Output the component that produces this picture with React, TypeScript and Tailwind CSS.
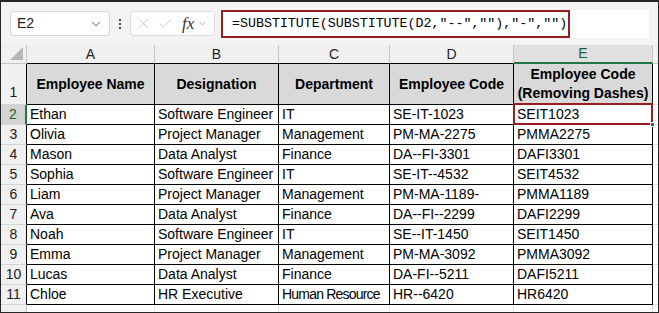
import { ChevronDown, X, Check } from 'lucide-react';

// ─── Data ─────────────────────────────────────────────────────────────────────

type Row = { name: string; designation: string; department: string; code: string; clean: string };

const rows: Row[] = [
  { name: 'Ethan', designation: 'Software Engineer', department: 'IT', code: 'SE-IT-1023', clean: 'SEIT1023' },
  { name: 'Olivia', designation: 'Project Manager', department: 'Management', code: 'PM-MA-2275', clean: 'PMMA2275' },
  { name: 'Mason', designation: 'Data Analyst', department: 'Finance', code: 'DA--FI-3301', clean: 'DAFI3301' },
  { name: 'Sophia', designation: 'Software Engineer', department: 'IT', code: 'SE-IT--4532', clean: 'SEIT4532' },
  { name: 'Liam', designation: 'Project Manager', department: 'Management', code: 'PM-MA-1189-', clean: 'PMMA1189' },
  { name: 'Ava', designation: 'Data Analyst', department: 'Finance', code: 'DA--FI--2299', clean: 'DAFI2299' },
  { name: 'Noah', designation: 'Software Engineer', department: 'IT', code: 'SE--IT-1450', clean: 'SEIT1450' },
  { name: 'Emma', designation: 'Project Manager', department: 'Management', code: 'PM-MA-3092', clean: 'PMMA3092' },
  { name: 'Lucas', designation: 'Data Analyst', department: 'Finance', code: 'DA-FI--5211', clean: 'DAFI5211' },
  { name: 'Chloe', designation: 'HR Executive', department: 'Human Resource', code: 'HR--6420', clean: 'HR6420' },
];

const letters = ['A', 'B', 'C', 'D', 'E'];

// ─── Formula bar ──────────────────────────────────────────────────────────────

function FormulaBar() {
  return (
    <div className="h-[43px] shrink-0 flex items-start pt-[9px] pl-[9px]">
      <div className="w-[100px] h-[25px] bg-white border border-[#d6d6d6] rounded-[4px] flex items-center justify-between pl-[6px] pr-[6px]">
        <span className="text-[14px] text-[#1f1f1f]">E2</span>
        <ChevronDown size={14} strokeWidth={1.5} className="text-[#444]" />
      </div>
      <div className="w-[20px] h-[25px] flex flex-col items-center justify-center gap-[2px]">
        <span className="w-[2px] h-[2px] bg-[#444]" />
        <span className="w-[2px] h-[2px] bg-[#444]" />
        <span className="w-[2px] h-[2px] bg-[#444]" />
      </div>
      <div className="w-[85px] h-[25px] bg-white border border-[#dcdcdc] rounded-[4px] flex items-center pl-[4px]">
        <X size={17} strokeWidth={1} className="text-[#b8b8b8]" />
        <Check size={17} strokeWidth={1} className="text-[#b8b8b8] ml-[5px]" />
        <span className="ml-[8px] font-['Liberation_Serif'] italic text-[17px] leading-none text-[#333]">fx</span>
        <ChevronDown size={11} strokeWidth={1.5} className="text-[#888] ml-[3px]" />
      </div>
      <div className="ml-[6px] -mt-[1px] w-[428px] h-[28px] bg-white flex">
        <div className="w-[349px] h-[28px] border-2 border-[#9b1b1f] flex items-center pl-[9px]">
          <span className="font-['Liberation_Mono'] text-[13.3px] text-black whitespace-pre">
            =SUBSTITUTE(SUBSTITUTE(D2,"--",""),"-","")
          </span>
        </div>
      </div>
    </div>
  );
}

// ─── Sheet ────────────────────────────────────────────────────────────────────

function Cell({ children, tight }: { children: React.ReactNode; tight?: boolean }) {
  return (
    <div className={`border-b border-r border-black flex items-center pl-[3px] text-[14px] text-black whitespace-nowrap overflow-hidden ${tight ? 'tracking-[-0.8px]' : ''}`}>
      {children}
    </div>
  );
}

function Sheet() {
  return (
    <div className="flex-1 grid grid-cols-[26px_128px_124px_111px_124px_139px_1fr] grid-rows-[19px_41px_repeat(10,20px)_1fr] bg-white">
      {/* Column headers */}
      <div className="bg-[#f0f0f0] border-r border-b border-[#c6c6c6] relative">
        <svg className="absolute right-[3px] bottom-[3px]" width="13" height="13" viewBox="0 0 13 13">
          <polygon points="13,0 13,13 0,13" fill="#b5b5b5" />
        </svg>
      </div>
      {letters.map(l =>
        l === 'E' ? (
          <div key={l} className="bg-[#e0e0e0] border-r border-[#c6c6c6] border-b-2 border-b-[#217346] flex items-center justify-center text-[14px] text-[#1e5c3a]">
            {l}
          </div>
        ) : (
          <div key={l} className="bg-[#f0f0f0] border-r border-[#c6c6c6] border-b border-b-black flex items-center justify-center text-[14px] text-[#222]">
            {l}
          </div>
        )
      )}
      <div className="bg-[#f0f0f0] border-b border-[#c6c6c6]" />

      {/* Row 1 */}
      <div className="bg-[#f0f0f0] border-b border-[#d4d4d4] border-r border-r-black flex items-end justify-center text-[14px] text-[#222] pb-[1px]">1</div>
      {['Employee Name', 'Designation', 'Department', 'Employee Code'].map(h => (
        <div key={h} className="bg-[#d9d9d9] border-b border-r border-black flex items-center justify-center font-bold text-[14px] text-black whitespace-nowrap">
          {h}
        </div>
      ))}
      <div className="bg-[#d9d9d9] border-b border-r border-black flex flex-col items-center justify-center font-bold text-[14px] leading-[19px] text-black whitespace-nowrap">
        <span>Employee Code</span>
        <span>(Removing Dashes)</span>
      </div>
      <div className="border-b border-[#e1e1e1]" />

      {/* Data rows */}
      {rows.map((r, i) => (
        <div key={r.name} className="contents">
          {i === 0 ? (
            <div className="bg-[#d2d2d2] border-b border-[#d4d4d4] border-r-2 border-r-[#217346] flex items-center justify-center text-[14px] text-[#1e5c3a]">2</div>
          ) : (
            <div className="bg-[#f0f0f0] border-b border-[#d4d4d4] border-r border-r-black flex items-center justify-center text-[14px] text-[#222]">{i + 2}</div>
          )}
          <Cell>{r.name}</Cell>
          <Cell>{r.designation}</Cell>
          <Cell tight={r.department.length > 12}>{r.department}</Cell>
          <Cell>{r.code}</Cell>
          {i === 0 ? (
            <div className="relative border-b border-r border-black flex items-center pl-[3px] text-[14px] text-black">
              {r.clean}
              <div className="absolute -left-[1px] -top-[2px] -right-[1px] -bottom-[1px] border-2 border-[#9b1b1f]" />
              <div className="absolute -right-[3px] -bottom-[3px] w-[5px] h-[5px] bg-[#217346] border border-white" />
            </div>
          ) : (
            <Cell>{r.clean}</Cell>
          )}
          <div className="border-b border-[#e1e1e1]" />
        </div>
      ))}

      {/* Row 12 */}
      <div className="bg-[#f0f0f0] border-r border-[#c6c6c6]" />
      {letters.map(l => (
        <div key={l} className="border-r border-[#e1e1e1]" />
      ))}
      <div />
    </div>
  );
}

export default function App() {
  return (
    <div className="w-[659px] h-[313px] overflow-hidden bg-[#f3f3f3] border border-[#262626] border-t-2 flex flex-col font-['Liberation_Sans',sans-serif]">
      <FormulaBar />
      <Sheet />
    </div>
  );
}
